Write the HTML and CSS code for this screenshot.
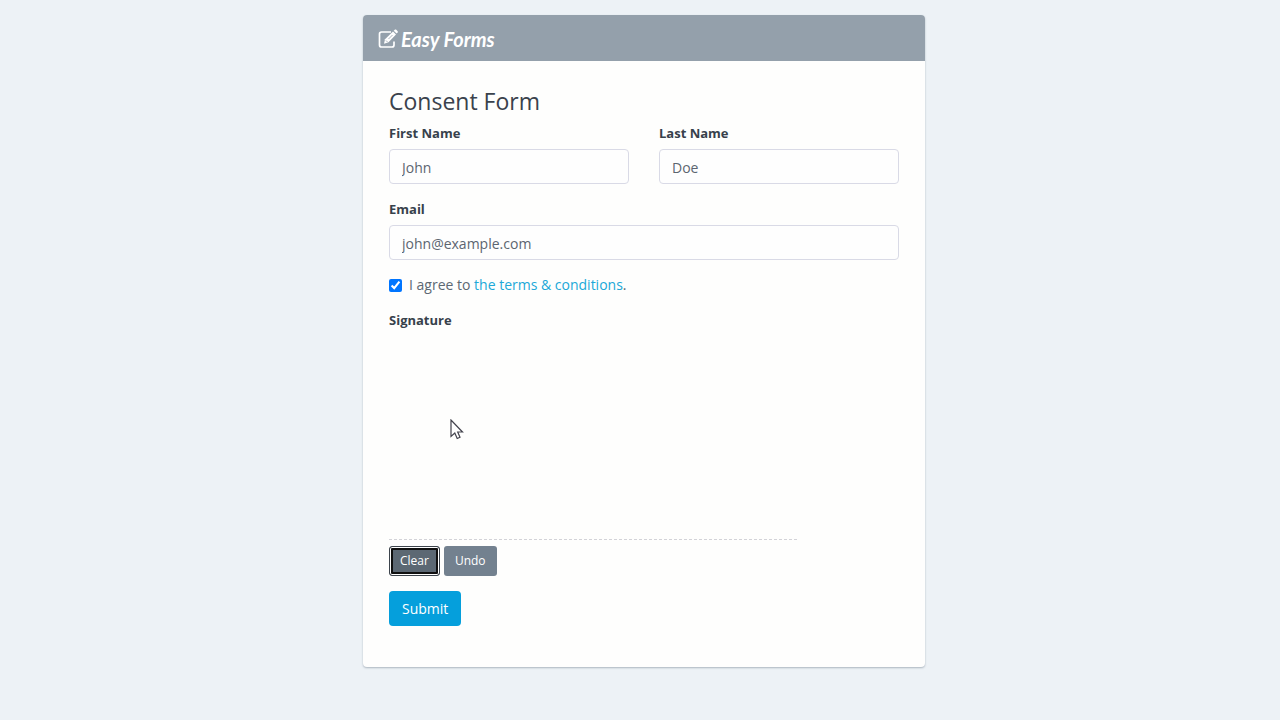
FILE: index.html
```html
<!DOCTYPE html>
<html lang="en">
<head>
    <meta charset="UTF-8">
    <meta name="viewport" content="width=device-width, initial-scale=1.0">
    <title>Consent Form</title>
    <link rel="stylesheet" href="styles.css">
</head>
<body>
    <main class="card">
        <header class="card-header">
            <svg class="brand-icon" viewBox="0 0 20 20" aria-hidden="true">
                <path d="M13 3H3.500A2 2 0 0 0 1.500 5V16A2 2 0 0 0 3.500 18H14A2 2 0 0 0 16 16V12.500" fill="none" stroke="#fff" stroke-width="1.700"/>
                <path d="M6 14.800L7 10.200L15 2.500L18 5.500L10.500 13.300Z" fill="#fff"/>
                <path d="M15.700 1.800L17 .6Q17.500 .2 18 .6L19.700 2.200Q20 2.700 19.700 3.200L18.600 4.500Z" fill="#fff"/>
                <path d="M8 11.500L9.500 13M10.500 10L14.500 6" fill="none" stroke="#95a0ab" stroke-width=".8"/>
            </svg>
            <span class="brand">Easy Forms</span>
        </header>
        <form class="card-body">
            <h1 class="title">Consent Form</h1>
            <div class="row">
                <div class="field">
                    <label for="firstName">First Name</label>
                    <input type="text" id="firstName" class="form-control" value="John">
                </div>
                <div class="field">
                    <label for="lastName">Last Name</label>
                    <input type="text" id="lastName" class="form-control" value="Doe">
                </div>
            </div>
            <div class="field">
                <label for="email">Email</label>
                <input type="email" id="email" class="form-control" value="john@example.com">
            </div>
            <div class="check">
                <input type="checkbox" id="agree" checked>
                <label for="agree">I agree to <a href="#">the terms &amp; conditions</a>.</label>
            </div>
            <div class="signature">
                <label for="pad">Signature</label>
                <canvas id="pad" class="pad"></canvas>
                <svg class="cursor" viewBox="0 0 14 21" aria-hidden="true">
                    <path d="M1 1V17.500L4.800 14L7.200 19.500L10 18.200L7.700 13H12.500Z" fill="#fff" stroke="#42424c" stroke-width="1.200"/>
                </svg>
                <div class="pad-actions">
                    <button type="button" class="btn btn-small btn-active">Clear</button>
                    <button type="button" class="btn btn-small">Undo</button>
                </div>
            </div>
            <button type="submit" class="btn btn-primary">Submit</button>
        </form>
    </main>
</body>
</html>
```
FILE: styles.css
```css
* {
    box-sizing: border-box;
}
body {
    margin: 0;
    padding: 15px 0 15px 8px;
    min-height: 100vh;
    font-family: "Open Sans", "Noto Sans", sans-serif;
    font-size: 14px;
    line-height: 20px;
    color: #5c6873;
    background-color: #edf2f6;
}
.card {
    max-width: 562px;
    margin: 0 auto;
    background-color: #fefefd;
    border-radius: 4px;
    box-shadow: 0 1px 2px rgba(50, 70, 90, 0.35);
}
.card-header {
    display: flex;
    align-items: center;
    gap: 3px;
    height: 46px;
    padding: 2px 15px 0;
    color: #fff;
    background-color: #94a0ab;
    border-radius: 4px 4px 0 0;
}
.brand-icon {
    width: 20px;
    height: 20px;
}
.brand {
    font-family: Lato, sans-serif;
    font-size: 20px;
    font-style: italic;
    font-weight: 700;
    line-height: 24px;
}
.card-body {
    padding: 24px 26px 41px;
}
.title {
    margin: 0 0 6px;
    font-size: 23px;
    font-weight: 400;
    line-height: 32px;
    color: #3a424c;
}
.row {
    display: flex;
    gap: 30px;
}
.field {
    flex: 1;
    margin-bottom: 15px;
}
.field label,
.signature label {
    display: block;
    margin-bottom: 6px;
    font-size: 13px;
    font-weight: 700;
    color: #37414b;
}
.form-control {
    display: block;
    width: 100%;
    height: 35px;
    padding: 1px 12px 0;
    font: inherit;
    color: #5c6570;
    background-color: #fefefe;
    border: 1px solid #d9dae6;
    border-radius: 4px;
}
.field + .check {
    margin-top: 15px;
}
.check {
    display: flex;
    align-items: center;
    gap: 7px;
    margin-bottom: 15px;
}
.check input {
    width: 13px;
    height: 13px;
    margin: 0;
    accent-color: #0075ff;
}
a {
    color: #20a8d8;
    text-decoration: none;
}
.signature {
    position: relative;
    margin-bottom: 15px;
}
.pad {
    display: block;
    width: 80%;
    height: 204px;
    border-bottom: 1px dashed #d3d3d8;
}
.cursor {
    position: absolute;
    top: 109px;
    left: 61px;
    width: 14px;
    height: 21px;
}
.pad-actions {
    display: flex;
    gap: 4px;
    margin-top: 6px;
}
.btn {
    height: 35px;
    padding: 0 12px;
    font: inherit;
    color: #fff;
    border: 1px solid transparent;
    border-radius: 4px;
    cursor: pointer;
}
.btn-small {
    height: 30px;
    padding: 0 10px;
    font-size: 12px;
    background-color: #73818f;
    border-radius: 3px;
}
.btn-active {
    background-color: #5c6873;
    border-color: #3d444c;
    box-shadow: inset 0 0 0 1px #fff, inset 0 0 0 3px #101010;
}
.btn-primary {
    background-color: #059fdc;
}
```
